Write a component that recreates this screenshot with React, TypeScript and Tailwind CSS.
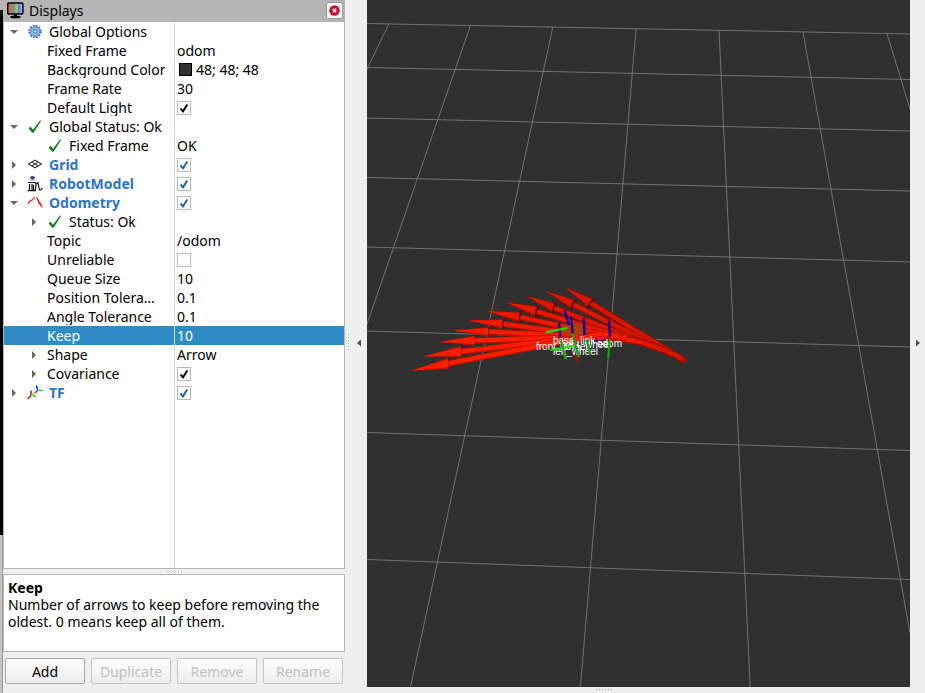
import React, { useState } from 'react';

type Row = {
  id: string;
  label: string;
  level: number;
  arrow?: 'open' | 'closed';
  icon?: React.ReactNode;
  value?: string;
  color?: boolean;
  check?: boolean;
  bold?: boolean;
};

const GearIcon = () => (
  <svg width="16" height="16" viewBox="0 0 16 16">
    <circle cx="8" cy="7.5" r="5.6" fill="none" stroke="#3a70b4" strokeWidth="2.2" strokeDasharray="1.8 1.13" />
    <circle cx="8" cy="7.5" r="4.6" fill="#8fb8e6" stroke="#5a8cc8" strokeWidth="1" />
    <circle cx="8" cy="7.5" r="1.6" fill="#fff" stroke="#3a70b4" strokeWidth="1" />
  </svg>
);

const CheckIcon = () => (
  <svg width="16" height="16" viewBox="0 0 16 16">
    <path d="M1.5 9.2 L3.8 7.8 L6 10.8 L13 1.4 L14.2 1.8 L6.6 13.8 L5 13.8 Z" fill="#1e7a26" />
  </svg>
);

const GridIcon = () => (
  <svg width="16" height="16" viewBox="0 0 16 16" fill="none" stroke="#3c3c3c" strokeWidth="1.1">
    <path d="M1.5 7 L8 3.2 L14.5 7 L8 10.8 Z M4.7 5.1 L11.3 8.9 M11.3 5.1 L4.7 8.9" />
  </svg>
);

const RobotIcon = () => (
  <svg width="16" height="16" viewBox="0 0 16 16">
    <ellipse cx="5.5" cy="1.6" rx="2.6" ry="1.4" fill="#20358a" />
    <path d="M3.5 3 H7.5 V4.6 H3.5 Z" fill="#999" />
    <path d="M1 6.5 H8.5 L9 9 L8.2 14.6 H6.5 V9 M5 8 V14.6 M2.5 8 V14.6 M0.5 14.6 H9" fill="none" stroke="#111" strokeWidth="1.2" />
    <path d="M8.5 8 L11 6.8 L12 12 Q12.6 15 14 13.6 L15.4 12" fill="none" stroke="#222" strokeWidth="1.3" />
  </svg>
);

const OdometryIcon = () => (
  <svg width="16" height="16" viewBox="0 0 16 16" fill="#e8200c">
    <path d="M0.2 8.8 L3.6 4.4 L4.4 5 L8 1.6 L8.4 2.6 L5 6 L4.4 5.8 L0.8 9.4 Z" />
    <path d="M9.2 2.6 L10.4 2.2 L12.4 6.4 L13.2 7 L15.6 12 L15.2 13 L11.6 8.6 Z" />
  </svg>
);

const TfIcon = () => (
  <svg width="16" height="16" viewBox="0 0 16 16" fill="none" strokeWidth="1.4">
    <path d="M9.5 0.5 L10.5 5 M4 5.5 V10.5" stroke="#1414f0" />
    <path d="M10.5 5.4 H16 M4.5 10 L9 11.6" stroke="#10e010" />
    <path d="M10.5 5.4 L8 8 M4.2 10.4 L0.5 14" stroke="#e01010" />
    <path d="M8 7.6 L4.5 10.4" stroke="#e8c030" />
  </svg>
);

const MonitorIcon = () => (
  <svg width="17" height="17" viewBox="0 0 17 17">
    <defs>
      <linearGradient id="screen">
        <stop offset="0" stopColor="#c46464" />
        <stop offset="0.33" stopColor="#a88080" />
        <stop offset="0.36" stopColor="#62a062" />
        <stop offset="0.64" stopColor="#9cc49c" />
        <stop offset="0.68" stopColor="#7070c4" />
        <stop offset="1" stopColor="#b8b8f4" />
      </linearGradient>
    </defs>
    <rect x="0.7" y="1" width="15.2" height="11" rx="1" fill="url(#screen)" stroke="#000" strokeWidth="1.4" />
    <path d="M6.8 12 H10 V14 H6.8 Z" fill="#000" />
    <ellipse cx="8.4" cy="15" rx="5.4" ry="1.3" fill="#000" />
  </svg>
);

const rows: Row[] = [
  { id: 'options', label: 'Global Options', level: 0, arrow: 'open', icon: <GearIcon /> },
  { id: 'frame', label: 'Fixed Frame', level: 1, value: 'odom' },
  { id: 'background', label: 'Background Color', level: 1, value: '48; 48; 48', color: true },
  { id: 'rate', label: 'Frame Rate', level: 1, value: '30' },
  { id: 'light', label: 'Default Light', level: 1, check: true },
  { id: 'status', label: 'Global Status: Ok', level: 0, arrow: 'open', icon: <CheckIcon /> },
  { id: 'frame-status', label: 'Fixed Frame', level: 1, icon: <CheckIcon />, value: 'OK' },
  { id: 'grid', label: 'Grid', level: 0, arrow: 'closed', icon: <GridIcon />, check: true, bold: true },
  { id: 'robot', label: 'RobotModel', level: 0, arrow: 'closed', icon: <RobotIcon />, check: true, bold: true },
  { id: 'odometry', label: 'Odometry', level: 0, arrow: 'open', icon: <OdometryIcon />, check: true, bold: true },
  { id: 'odometry-status', label: 'Status: Ok', level: 1, arrow: 'closed', icon: <CheckIcon /> },
  { id: 'topic', label: 'Topic', level: 1, value: '/odom' },
  { id: 'unreliable', label: 'Unreliable', level: 1, check: false },
  { id: 'queue', label: 'Queue Size', level: 1, value: '10' },
  { id: 'position', label: 'Position Tolera…', level: 1, value: '0.1' },
  { id: 'angle', label: 'Angle Tolerance', level: 1, value: '0.1' },
  { id: 'keep', label: 'Keep', level: 1, value: '10' },
  { id: 'shape', label: 'Shape', level: 1, arrow: 'closed', value: 'Arrow' },
  { id: 'covariance', label: 'Covariance', level: 1, arrow: 'closed', check: true },
  { id: 'tf', label: 'TF', level: 0, arrow: 'closed', icon: <TfIcon />, check: true, bold: true },
];

const TreeRow: React.FC<{ row: Row; selected: boolean; onSelect: () => void }> = ({ row, selected, onSelect }) => {
  const [checked, setChecked] = useState(row.check ?? false);
  const labelColor = row.bold ? 'font-bold text-[#2a76c6]' : '';

  return (
    <tr onClick={onSelect} className={selected ? 'h-[19px] bg-[#308cc6] text-white' : 'h-[19px]'}>
      <td className="p-0">
        <div className={row.level === 0 ? 'flex h-[19px] items-center pl-[5px]' : 'flex h-[19px] items-center pl-[25px]'}>
          <span className="flex w-[18px] shrink-0 items-center">
            {row.arrow && (
              <button type="button" aria-label={`Toggle ${row.label}`}>
                <svg width="10" height="10" viewBox="0 0 10 10" fill="#666">
                  <path d={row.arrow === 'open' ? 'M1 3 H9 L5 7 Z' : 'M3 1 L7 5 L3 9 Z'} />
                </svg>
              </button>
            )}
          </span>
          {row.icon && <span className="mr-1.5 shrink-0">{row.icon}</span>}
          <label htmlFor={row.check === undefined ? undefined : row.id} className={`truncate ${labelColor}`}>
            {row.label}
          </label>
        </div>
      </td>
      <td className="border-l border-[#dcdcdc] p-0">
        <div className="flex h-[19px] items-center pl-0.5">
          {row.color && <span className="mr-1 ml-0.5 size-[13px] border border-black bg-[#303030]" />}
          {row.value}
          {row.check !== undefined && (
            <span className="relative flex size-[14px]">
              <input
                id={row.id}
                type="checkbox"
                checked={checked}
                onChange={(e) => setChecked(e.target.checked)}
                className="size-[14px] appearance-none border border-[#b8b8b8] bg-white"
              />
              {checked && (
                <svg className="pointer-events-none absolute inset-0" width="14" height="14" viewBox="0 0 14 14">
                  <path
                    d="M3.5 7.5 L6 10.3 L10.3 3.4"
                    fill="none"
                    stroke={row.bold ? '#1f62a8' : '#000'}
                    strokeWidth="1.9"
                  />
                </svg>
              )}
            </span>
          )}
        </div>
      </td>
    </tr>
  );
};

// x1, y1, x2, y2
const gridLines = [
  [367, 23.5, 910, 34],
  [367, 67.5, 910, 79.5],
  [367, 118, 910, 131],
  [367, 177.5, 910, 191],
  [367, 247, 910, 262],
  [367, 331, 910, 347],
  [367, 432.5, 910, 450.5],
  [367, 559.5, 910, 579.5],
  [388.8, 24, 367, 69],
  [470.5, 25.3, 367, 324],
  [552.8, 27.3, 410.5, 687],
  [636, 29, 580.4, 687],
  [719, 30.3, 750.2, 687],
  [803, 32, 910, 633],
  [887, 33.7, 910, 109],
];

// tip, the two corners of the head, tail, colours
const arrows = [
  { tip: [565.5, 287.5], a: [594, 299], b: [588, 308], tail: [685, 361], disc: 2, fill: '#d81600', dark: '#8e0c00' },
  { tip: [546, 291], a: [576, 300], b: [571, 309.5], tail: [673, 355], disc: 2, fill: '#da1700', dark: '#8e0c00' },
  { tip: [526.5, 296], a: [556, 303], b: [553, 313.5], tail: [662, 350], disc: 1.9, fill: '#de1800', dark: '#920c00' },
  { tip: [506, 302.5], a: [538, 306], b: [536, 317.5], tail: [652, 346], disc: 1.8, fill: '#e41900', dark: '#980d00' },
  { tip: [487, 311], a: [521, 312], b: [520, 323], tail: [643, 343], disc: 1.6, fill: '#ea1a00', dark: '#a00e00' },
  { tip: [469, 320.5], a: [504, 319], b: [503, 329.5], tail: [634, 341], disc: 1.3, fill: '#f01b00', dark: '#a60f00' },
  { tip: [453, 330.5], a: [489, 327], b: [489, 337], tail: [626, 338], disc: 0.9, fill: '#f61c00', dark: '#b01000' },
  { tip: [439, 342], a: [475, 335.5], b: [476, 346], tail: [618, 336], disc: 0.6, fill: '#fa1d00', dark: '#b81000' },
  { tip: [423, 356.5], a: [461, 346], b: [462, 357.5], tail: [610, 334], disc: 0.4, fill: '#fc1d00', dark: '#bc1100' },
  { tip: [410.5, 371], a: [448, 358], b: [449.5, 369], tail: [602, 334], disc: 0.4, fill: '#ff1e00', dark: '#c01200' },
];

const axes = [
  { color: '#c00000', line: [575.7, 351.7, 577, 361.7] },
  { color: '#0a0aa0', line: [559, 323, 560.5, 339] },
  { color: '#0a0aa0', line: [564.7, 310.7, 569, 325] },
  { color: '#0a0aa0', line: [571, 316.7, 572.7, 333] },
  { color: '#0a0aa0', line: [583.7, 318.3, 584.7, 335] },
  { color: '#0a0aa0', line: [609, 320.7, 610, 336.7] },
];

const greenAxes = [
  { color: '#1ee000', line: [545.7, 332.3, 567.3, 328] },
  { color: '#1ee000', line: [550.7, 350, 573.3, 346] },
  { color: '#12a812', line: [561, 340.7, 565.7, 359.3] },
  { color: '#12a812', line: [572.7, 334.3, 578.7, 357.3] },
  { color: '#12a812', line: [586.7, 340, 590.3, 354] },
  { color: '#12a812', line: [609.7, 339.3, 608.3, 357.7] },
];

const Scene: React.FC = () => (
  <svg className="size-full" viewBox="367 0 543 687" preserveAspectRatio="xMidYMid slice">
    <g stroke="#737373" strokeWidth="1">
      {gridLines.map(([x1, y1, x2, y2], i) => (
        <line key={i} x1={x1} y1={y1} x2={x2} y2={y2} />
      ))}
    </g>
    {arrows.map(({ tip, a, b, tail, disc, fill, dark }, i) => {
      const mx = (a[0] + b[0]) / 2;
      const my = (a[1] + b[1]) / 2;
      return (
        <g key={i}>
          <polygon points={`${tip} ${a} ${b}`} fill={dark} />
          <polygon points={`${tip} ${a[0]},${a[1] + 1} ${b[0]},${b[1] - 2}`} fill={fill} />
          <ellipse
            cx={mx}
            cy={my}
            rx={disc}
            ry="5.4"
            fill="#5c0800"
            transform={`rotate(${(Math.atan2(a[0] - b[0], b[1] - a[1]) * 180) / Math.PI} ${mx} ${my})`}
          />
          <line x1={mx} y1={my} x2={tail[0]} y2={tail[1]} stroke={dark} strokeWidth="6.2" />
          <line x1={mx} y1={my - 0.3} x2={tail[0]} y2={tail[1] - 0.3} stroke={fill} strokeWidth="4.2" />
        </g>
      );
    })}
    <ellipse cx="684.7" cy="360.7" rx="2.2" ry="3.2" fill="#a80f00" transform="rotate(32 684.7 360.7)" />
    <ellipse cx="574" cy="330" rx="13" ry="6.5" fill="#9a5010" opacity="0.65" />
    <path d="M597 337 L604 338.5 L598 341 Z" fill="#e01490" />
    {axes.map(({ color, line }, i) => (
      <line key={i} x1={line[0]} y1={line[1]} x2={line[2]} y2={line[3]} stroke={color} strokeWidth="2.4" />
    ))}
    <g fill="#fff" fontFamily="Liberation Sans, sans-serif" fontSize="10">
      <text x="553" y="344">base_link</text>
      <text x="536" y="350">front_wheel</text>
      <text x="560" y="348">right_wheel</text>
      <text x="597" y="347">odom</text>
      <text x="553" y="355">left_wheel</text>
    </g>
    {greenAxes.map(({ color, line }, i) => (
      <line key={i} x1={line[0]} y1={line[1]} x2={line[2]} y2={line[3]} stroke={color} strokeWidth="2.2" />
    ))}
  </svg>
);

const Grip = () => (
  <svg width="17" height="2" viewBox="0 0 17 2" fill="#a8a8a8">
    {[0, 3, 6, 9, 12, 15].map((x) => (
      <rect key={x} x={x} y="0" width="1" height="1" />
    ))}
  </svg>
);

const VerticalGrip = () => (
  <svg width="2" height="17" viewBox="0 0 2 17" fill="#a8a8a8">
    {[0, 3, 6, 9, 12, 15].map((y) => (
      <rect key={y} x="0" y={y} width="1" height="1" />
    ))}
  </svg>
);

const buttonClass =
  'h-[26px] flex-1 rounded-[2px] border border-[#a8a8a8] bg-gradient-to-b from-white to-[#ececec] disabled:border-[#c4c4c4] disabled:text-[#c0c0c0]';

const App: React.FC = () => {
  const [selected, setSelected] = useState('keep');

  return (
    <div className="flex h-screen overflow-hidden bg-[#efefef] font-['Noto_Sans','Open_Sans',sans-serif] text-[14px] leading-[17px] text-black">
      <div className="flex w-[3px] shrink-0 flex-col bg-black">
        <div className="h-2.5 bg-[#b5b5b5]" />
        <div className="mt-auto h-[158px] border-r border-[#999] bg-[#c4c4c4]" />
      </div>

      <aside className="flex w-[342px] shrink-0 flex-col">
        <header className="flex h-[22px] shrink-0 items-center gap-[5px] bg-[#b5b5b5] pr-0.5 pb-0.5 pl-1">
          <MonitorIcon />
          <h1>Displays</h1>
          <button
            type="button"
            aria-label="Close"
            className="ml-auto flex h-[17px] w-[17px] items-center justify-center rounded-[2px] border border-[#999] bg-[#f7f7f7]"
          >
            <svg width="11" height="11" viewBox="0 0 11 11">
              <circle cx="5.5" cy="5.5" r="5.2" fill="#c8102e" />
              <path d="M3.8 3.8 L7.2 7.2 M7.2 3.8 L3.8 7.2" stroke="#fff" strokeWidth="1.4" />
            </svg>
          </button>
        </header>

        <div className="flex min-h-0 flex-1 flex-col border border-t-0 border-[#b5b5b5] bg-white">
          <table className="w-full table-fixed border-separate border-spacing-0">
            <colgroup>
              <col className="w-[170px]" />
              <col />
            </colgroup>
            <tbody>
              {rows.map((row) => (
                <TreeRow key={row.id} row={row} selected={selected === row.id} onSelect={() => setSelected(row.id)} />
              ))}
            </tbody>
          </table>
          <div className="flex flex-1 pl-[170px]">
            <div className="border-l border-[#dcdcdc]" />
          </div>
        </div>

        <div className="flex h-[5px] shrink-0 items-center justify-center">
          <Grip />
        </div>

        <section className="h-[78px] shrink-0 border border-[#b5b5b5] bg-white px-1 py-1">
          <h2 className="font-bold">Keep</h2>
          <p>Number of arrows to keep before removing the oldest. 0 means keep all of them.</p>
        </section>

        <div className="flex shrink-0 gap-1.5 px-0.5 pt-1.5 pb-[9px]">
          <button type="button" className={buttonClass}>Add</button>
          <button type="button" disabled className={buttonClass}>Duplicate</button>
          <button type="button" disabled className={buttonClass}>Remove</button>
          <button type="button" disabled className={buttonClass}>Rename</button>
        </div>
      </aside>

      <div className="flex w-[22px] shrink-0 items-center justify-between pr-1 pb-2 pl-[3px]">
        <VerticalGrip />
        <button type="button" aria-label="Hide left panel">
          <svg width="8" height="8" viewBox="0 0 8 8" fill="#505050">
            <path d="M6 0.5 L2 4 L6 7.5 Z" />
          </svg>
        </button>
      </div>

      <main className="flex min-w-0 flex-1 flex-col">
        <div className="min-h-0 flex-1 bg-[#303030]">
          <Scene />
        </div>
        <div className="flex h-1.5 shrink-0 items-center justify-center pr-17">
          <Grip />
        </div>
      </main>

      <div className="flex w-[15px] shrink-0 items-center justify-center pb-2">
        <button type="button" aria-label="Hide right panel">
          <svg width="8" height="8" viewBox="0 0 8 8" fill="#505050">
            <path d="M2 0.5 L6 4 L2 7.5 Z" />
          </svg>
        </button>
      </div>
    </div>
  );
};

export default App;
